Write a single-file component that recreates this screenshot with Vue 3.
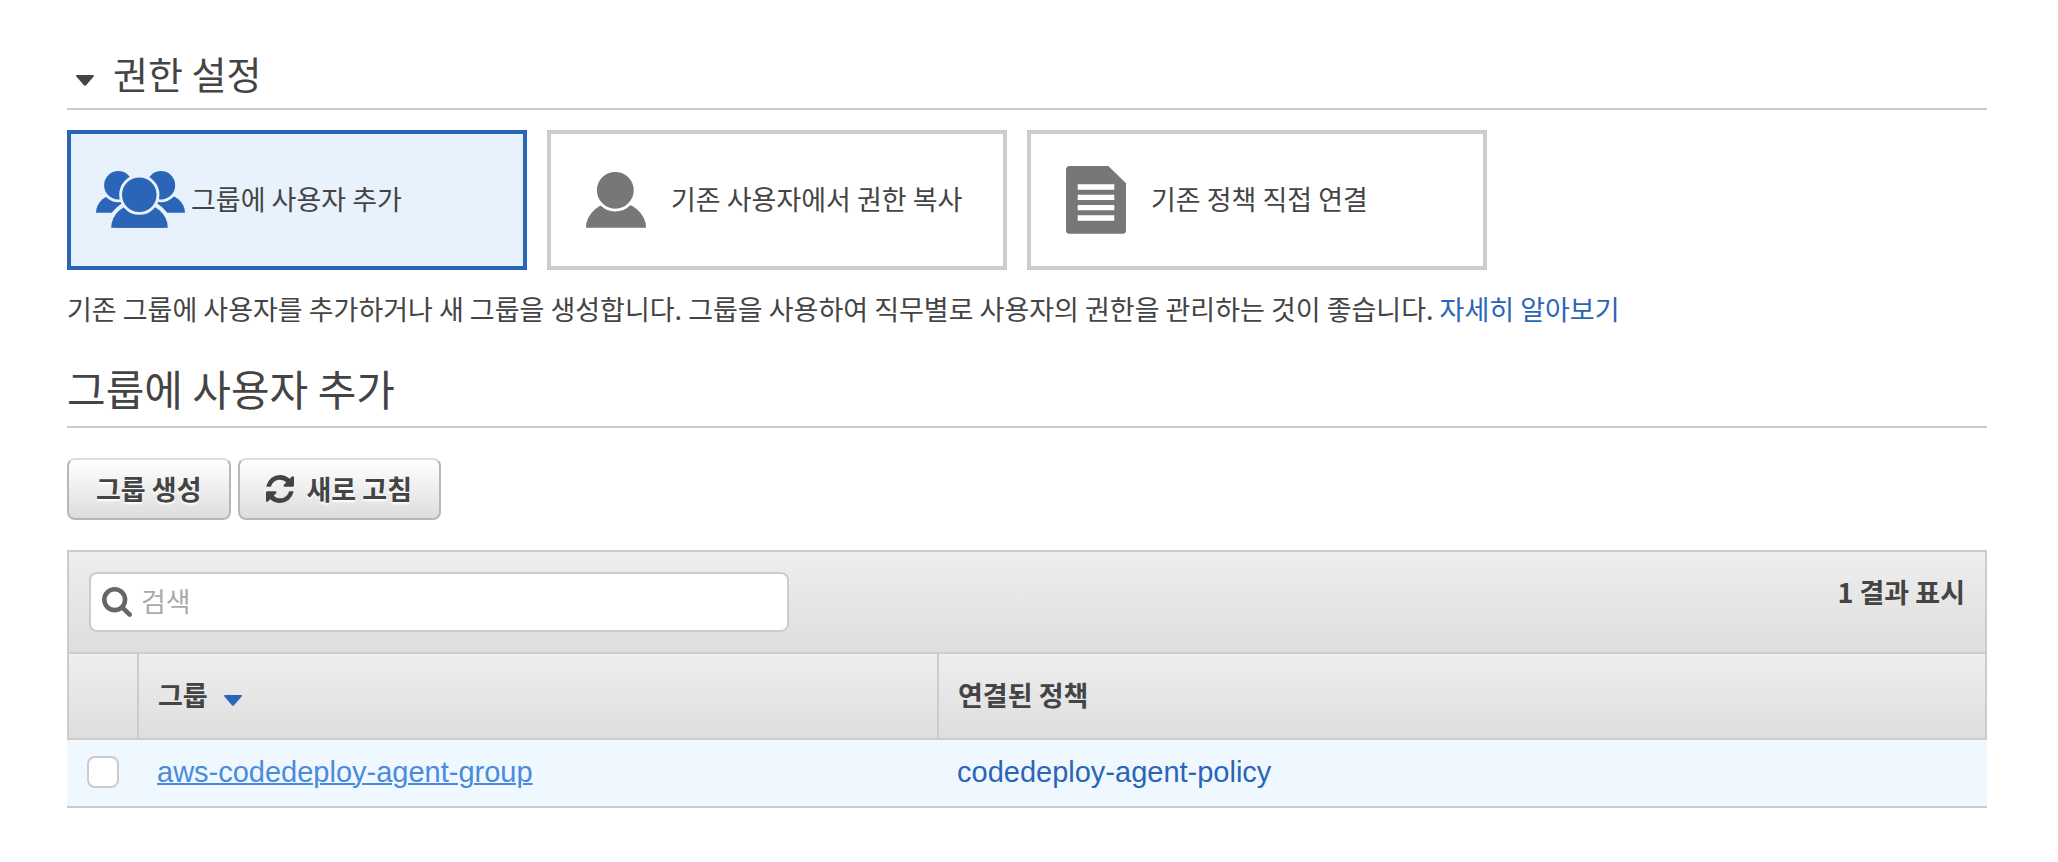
<script setup>
import { ref } from 'vue'

const query = ref('')
const selectedOption = ref('group')
const options = [
  { id: 'group', label: '그룹에 사용자 추가' },
  { id: 'copy', label: '기존 사용자에서 권한 복사' },
  { id: 'policy', label: '기존 정책 직접 연결' }
]
const groups = ref([
  { name: 'aws-codedeploy-agent-group', policy: 'codedeploy-agent-policy', checked: false }
])
</script>

<template>
  <main class="page">
    <h2 class="section-title">
      <button class="toggle" type="button" aria-label="권한 설정 접기">
        <svg class="caret" viewBox="0 0 18 11" aria-hidden="true">
          <path d="M1 0H17Q18.600 0.300 17.500 1.700L10 10.300Q9 11.300 8 10.300L0.500 1.700Q-0.600 0.300 1 0Z" />
        </svg>
      </button>
      권한 설정
    </h2>

    <div class="options">
      <button
        v-for="option in options"
        :key="option.id"
        type="button"
        class="option"
        :class="{ selected: option.id === selectedOption }"
        :aria-pressed="option.id === selectedOption"
        @click="selectedOption = option.id"
      >
        <svg v-if="option.id === 'group'" class="option-icon" viewBox="0 0 96 72" aria-hidden="true">
          <path d="M5 48.700A22.300 19 0 0 1 49.600 48.700Z" />
          <path d="M49.400 48.700A22.300 19 0 0 1 94 48.700Z" />
          <circle class="halo" cx="27.300" cy="21.300" r="15.600" />
          <circle class="halo" cx="70" cy="21.300" r="15.600" />
          <path class="halo wide" d="M20.200 63.700A28.300 24.700 0 0 1 76.800 63.700" />
          <path d="M20.200 63.700A28.300 24.700 0 0 1 76.800 63.700Z" />
          <circle class="halo" cx="48.300" cy="30.700" r="18.700" />
        </svg>
        <svg v-else-if="option.id === 'copy'" class="option-icon" viewBox="0 0 96 72" aria-hidden="true">
          <path d="M15 63.700A30 25.800 0 0 1 75 63.700Z" />
          <circle class="halo" cx="44.300" cy="26.300" r="19.800" />
        </svg>
        <svg v-else class="option-icon" viewBox="0 0 96 72" aria-hidden="true">
          <path
            fill-rule="evenodd"
            d="M18.500 2H57.300L75 19.300V66.200Q75 69.700 71.500 69.700H18.500Q15 69.700 15 66.200V5.500Q15 2 18.500 2ZM26.700 20.300V25.700H63.300V20.300ZM26.700 30.700V36H63.300V30.700ZM26.700 41V46.300H63.300V41ZM26.700 51.300V56.700H63.300V51.300Z"
          />
        </svg>
        <span class="option-label">{{ option.label }}</span>
      </button>
    </div>

    <p class="description">
      기존 그룹에 사용자를 추가하거나 새 그룹을 생성합니다. 그룹을 사용하여 직무별로 사용자의 권한을 관리하는 것이 좋습니다.
      <a href="#">자세히 알아보기</a>
    </p>

    <h1 class="group-title">그룹에 사용자 추가</h1>

    <div class="actions">
      <button class="action" type="button">그룹 생성</button>
      <button class="action with-icon" type="button">
        <svg class="refresh" viewBox="0 0 1536 1536" aria-hidden="true">
          <path d="M1511 928q0 5-1 7-64 268-268 434.500t-478 166.500q-146 0-282.500-55t-243.500-157l-129 129q-19 19-45 19t-45-19-19-45v-448q0-26 19-45t45-19h448q26 0 45 19t19 45-19 45l-137 137q71 66 161 102t187 36q134 0 250-65t186-179q11-17 53-117 8-23 30-23h192q13 0 22.500 9.500t9.500 22.500zm25-800v448q0 26-19 45t-45 19h-448q-26 0-45-19t-19-45 19-45l138-138q-148-137-349-137-134 0-250 65t-186 179q-11 17-53 117-8 23-30 23h-199q-13 0-22.500-9.500t-9.500-22.500v-7q65-268 270-434.500t480-166.500q146 0 284 55.500t245 156.500l130-129q19-19 45-19t45 19 19 45z" />
        </svg>
        새로 고침
      </button>
    </div>

    <section>
      <div class="toolbar">
        <label class="search">
          <svg class="search-icon" viewBox="0 0 1664 1664" aria-hidden="true">
            <path d="M1152 704q0-185-131.500-316.500t-316.500-131.500-316.500 131.500-131.500 316.500 131.500 316.500 316.500 131.500 316.500-131.500 131.500-316.500zm512 832q0 52-38 90t-90 38q-54 0-90-38l-343-342q-179 124-399 124-143 0-273.500-55.500t-225-150-150-225-55.500-273.500 55.500-273.500 150-225 225-150 273.500-55.500 273.500 55.500 225 150 150 225 55.500 273.500q0 220-124 399l343 343q37 37 37 90z" />
          </svg>
          <input v-model="query" type="text" placeholder="검색" aria-label="검색" />
        </label>
        <span class="count">{{ groups.length }} 결과 표시</span>
      </div>

      <table class="groups">
        <thead>
          <tr>
            <th class="col-check"></th>
            <th class="col-group">
              그룹
              <svg class="caret sort" viewBox="0 0 18 11" aria-hidden="true">
                <path d="M1 0H17Q18.600 0.300 17.500 1.700L10 10.300Q9 11.300 8 10.300L0.500 1.700Q-0.600 0.300 1 0Z" />
              </svg>
            </th>
            <th>연결된 정책</th>
          </tr>
        </thead>
        <tbody>
          <tr v-for="group in groups" :key="group.name">
            <td class="cell-check">
              <input v-model="group.checked" type="checkbox" :aria-label="group.name" />
            </td>
            <td><a class="group-link" href="#">{{ group.name }}</a></td>
            <td><a href="#">{{ group.policy }}</a></td>
          </tr>
        </tbody>
      </table>
    </section>
  </main>
</template>

<style>
body {
  margin: 0;
  background: #fff;
}
</style>

<style scoped>
.page {
  padding: 48px 71px 54px 67px;
  color: #444;
  font-family: "Noto Sans CJK KR", sans-serif;
  font-size: 27px;
  line-height: 40px;
}

.page * {
  box-sizing: border-box;
}

button,
input {
  font: inherit;
  color: inherit;
}

a {
  color: #2b65b7;
  text-decoration: none;
}

.section-title,
.group-title {
  margin: 0;
  border-bottom: 2px solid #ccc;
  font-weight: 400;
}

.section-title {
  display: flex;
  align-items: center;
  gap: 19px;
  padding: 0 0 10px 9px;
  font-size: 38px;
  line-height: 50px;
}

.toggle {
  display: flex;
  padding: 14px 0 0;
  border: 0;
  background: none;
}

.caret {
  width: 18px;
  height: 11px;
  fill: currentColor;
}

.options {
  display: flex;
  gap: 20px;
  margin-top: 20px;
}

.option {
  --surface: #fff;
  display: flex;
  align-items: center;
  gap: 4px;
  width: 460px;
  padding: 30px 20px;
  border: 4px solid #ccc;
  background: var(--surface);
  text-align: left;
}

.option.selected {
  --surface: #e8f2fd;
  border-color: #2b65b7;
}

.option-icon {
  flex: none;
  width: 96px;
  height: 72px;
  fill: #777;
}

.selected .option-icon {
  fill: #2b65b7;
}

.option-label {
  padding-bottom: 2px;
}

.halo {
  stroke: var(--surface);
  stroke-width: 2.8;
}

.halo.wide {
  stroke-width: 8;
}

.description {
  margin: 19px 0 0;
}

.group-title {
  margin-top: 29px;
  padding-bottom: 8px;
  font-size: 42px;
  line-height: 60px;
}

.actions {
  display: flex;
  gap: 7px;
  margin: 30px 0;
}

.action {
  display: flex;
  align-items: center;
  gap: 13px;
  padding: 9px 27px;
  border: 2px solid #b7b7b7;
  border-top-color: #ddd;
  border-radius: 8px;
  background: linear-gradient(#fff, #ddd);
  font-weight: 700;
  text-shadow: 0 2px 2px #fff;
}

.action.with-icon {
  padding-left: 26px;
}

.refresh {
  width: 28px;
  height: 28px;
  fill: currentColor;
}

.toolbar {
  display: flex;
  justify-content: space-between;
  align-items: flex-start;
  gap: 20px;
  padding: 20px;
  border: 2px solid #ccc;
  background: linear-gradient(#eee, #dedede);
}

.search {
  display: flex;
  align-items: center;
  gap: 9px;
  flex: 0 1 700px;
  min-width: 0;
  padding: 8px 11px;
  border: 2px solid #ccc;
  border-radius: 8px;
  background: #fff;
}

.search-icon {
  flex: none;
  width: 30px;
  height: 30px;
  fill: #666;
}

.search input {
  flex: 1;
  min-width: 0;
  height: 40px;
  padding: 0 0 2px;
  border: 0;
  outline: 0;
  background: none;
}

.search input::placeholder {
  color: #aaa;
  opacity: 1;
}

.count {
  font-weight: 700;
}

.groups {
  width: 100%;
  border-collapse: separate;
  border-spacing: 0;
  table-layout: fixed;
}

th {
  padding: 21px 19px 23px;
  border-right: 2px solid #ccc;
  border-bottom: 2px solid #ccc;
  background: linear-gradient(#eee, #dedede);
  font-weight: 700;
  text-align: left;
}

.col-check {
  width: 72px;
  border-left: 2px solid #ccc;
}

.col-group {
  width: 800px;
}

.sort {
  margin-left: 10px;
  fill: #2b65b7;
}

td {
  padding: 12px 18px 14px;
  border-bottom: 2px solid #ccc;
  background: #f0f8ff;
  font-family: "Liberation Sans", "Noto Sans CJK KR", sans-serif;
  font-size: 29px;
}

.group-link {
  color: #4a8bdc;
  text-decoration: underline;
  text-decoration-thickness: 2px;
}

.cell-check {
  padding-left: 20px;
}

.cell-check input {
  display: block;
  appearance: none;
  width: 32px;
  height: 32px;
  margin: 0;
  border: 2px solid #ccc;
  border-radius: 8px;
  background: #fff;
}

.cell-check input:checked {
  background: #2b65b7;
}
</style>
